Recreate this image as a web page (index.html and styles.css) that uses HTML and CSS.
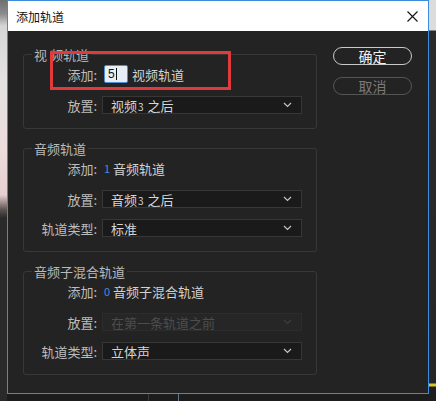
FILE: index.html
```html
<!DOCTYPE html>
<html>
<head>
    <meta charset="utf-8">
    <title>添加轨道</title>
    <link rel="stylesheet" href="styles.css">
</head>
<body>
    <div class="screen">
        <div class="edge-left"></div>
        <div class="middle">
            <div class="dialog">
                <div class="title-bar">
                    <span class="title">添加轨道</span>
                    <svg class="close" width="11" height="11" viewBox="0 0 11 11">
                        <path d="M0.5 0.5L10.5 10.5M10.5 0.5L0.5 10.5" stroke="#111" stroke-width="1.1" fill="none"/>
                    </svg>
                </div>
                <div class="dialog-body">
                    <div class="groups">
                        <fieldset class="group">
                            <legend>视 频轨道</legend>
                            <div class="row">
                                <span class="label">添加:</span>
                                <span class="count-field">5<span class="caret"></span></span>
                                <span class="unit">视频轨道</span>
                            </div>
                            <div class="row">
                                <span class="label">放置:</span>
                                <div class="select">
                                    <span>视频<span class="num">3</span> 之后</span>
                                    <svg class="chevron" width="9" height="6" viewBox="0 0 9 6"><path d="M1 1l3.5 3.5L8 1" stroke="#c4c4c4" stroke-width="1.2" fill="none"/></svg>
                                </div>
                            </div>
                        </fieldset>

                        <fieldset class="group">
                            <legend>音频轨道</legend>
                            <div class="row">
                                <span class="label">添加:</span>
                                <span class="count">1</span>
                                <span class="unit">音频轨道</span>
                            </div>
                            <div class="row">
                                <span class="label">放置:</span>
                                <div class="select">
                                    <span>音频<span class="num">3</span> 之后</span>
                                    <svg class="chevron" width="9" height="6" viewBox="0 0 9 6"><path d="M1 1l3.5 3.5L8 1" stroke="#c4c4c4" stroke-width="1.2" fill="none"/></svg>
                                </div>
                            </div>
                            <div class="row row-tight">
                                <span class="label">轨道类型:</span>
                                <div class="select">
                                    <span>标准</span>
                                    <svg class="chevron" width="9" height="6" viewBox="0 0 9 6"><path d="M1 1l3.5 3.5L8 1" stroke="#c4c4c4" stroke-width="1.2" fill="none"/></svg>
                                </div>
                            </div>
                        </fieldset>

                        <fieldset class="group">
                            <legend>音频子混合轨道</legend>
                            <div class="row">
                                <span class="label">添加:</span>
                                <span class="count">0</span>
                                <span class="unit">音频子混合轨道</span>
                            </div>
                            <div class="row">
                                <span class="label">放置:</span>
                                <div class="select disabled">
                                    <span>在第一条轨道之前</span>
                                    <svg class="chevron" width="9" height="6" viewBox="0 0 9 6"><path d="M1 1l3.5 3.5L8 1" stroke="#3e3e3e" stroke-width="1.2" fill="none"/></svg>
                                </div>
                            </div>
                            <div class="row row-tight">
                                <span class="label">轨道类型:</span>
                                <div class="select">
                                    <span>立体声</span>
                                    <svg class="chevron" width="9" height="6" viewBox="0 0 9 6"><path d="M1 1l3.5 3.5L8 1" stroke="#c4c4c4" stroke-width="1.2" fill="none"/></svg>
                                </div>
                            </div>
                        </fieldset>
                    </div>

                    <div class="buttons">
                        <button type="button" class="btn btn-ok">确定</button>
                        <button type="button" class="btn btn-cancel">取消</button>
                    </div>
                </div>
                <!-- red marker round the video track count -->
                <div class="highlight"></div>
            </div>
            <div class="under"></div>
        </div>
        <div class="edge-right"></div>
    </div>
</body>
</html>
```

FILE: styles.css
```css
body {
    margin: 0;
    background-color: #1d1d1d;
    font-family: "Noto Sans CJK SC", "Noto Sans", sans-serif;
    overflow: hidden;
}

.screen {
    display: flex;
    width: 436px;
    height: 401px;
}

.edge-left {
    width: 7px;
    background: linear-gradient(to bottom, #6f6f6f 0, #8c8c8c 14px, #d6d6d6 26px, #e4e2e2 80px, #eddcdc 150px, #e7cfcf 195px, #5a5050 210px, #2a2a2a 218px, #2a2a2a 100%);
}

.edge-right {
    width: 7px;
    background: linear-gradient(to bottom, #dcdcdc 0, #dcdcdc 30px, #2b2b2b 31px, #262626 383px, #d8c820 384px, #d8c820 386px, #1f1f1f 387px);
}

.middle {
    display: flex;
    flex-direction: column;
    width: 422px;
}

.under {
    flex: 1;
    background:
        linear-gradient(#3a3a3a, #3a3a3a) 141px 0 / 1px 100% no-repeat,
        linear-gradient(#5d7690, #5d7690) 171px 0 / 1px 100% no-repeat,
        #1c1c1c;
}

.dialog {
    position: relative;
    box-sizing: border-box;
    width: 422px;
    height: 394px;
    border: 1px solid #3c8bdc;
    background-color: #232323;
}

.title-bar {
    display: flex;
    justify-content: space-between;
    align-items: center;
    height: 30px;
    padding: 0 10px 0 8px;
    background-color: #fff;
}

.title {
    font-size: 12px;
    color: #111;
}

.dialog-body {
    display: flex;
    padding: 16px 15px 0 15px;
}

.groups {
    display: flex;
    flex-direction: column;
    gap: 12px;
}

.group {
    box-sizing: border-box;
    width: 294px;
    margin: 0;
    padding: 3px 0 14px 0;
    border: 1px solid #383838;
    border-radius: 3px;
}

.group legend {
    margin-left: 8px;
    padding: 0 2px;
    font-size: 13px;
    line-height: 15px;
    color: #b9b9b9;
}

.row {
    display: flex;
    align-items: center;
    height: 18px;
    font-size: 13px;
    color: #cfcfcf;
}

.row + .row {
    margin-top: 13px;
}

.row + .row-tight {
    margin-top: 11px;
}

.label {
    width: 73px;
    text-align: right;
    color: #bdbdbd;
}

/* text box with the caret after the typed count */
.count-field {
    box-sizing: border-box;
    display: flex;
    align-items: center;
    width: 24px;
    height: 18px;
    margin: 0 4px 0 7px;
    padding-left: 3px;
    border: 1px solid #4b8fd8;
    border-radius: 2px;
    background-color: #e9eef6;
    font-family: "Liberation Sans", sans-serif;
    font-size: 12px;
    color: #111;
}

.caret {
    width: 1px;
    height: 12px;
    margin-left: 1px;
    background-color: #111;
}

.count {
    margin: 0 3px 0 7px;
    font-size: 11px;
    color: #3d8ce4;
}

.unit {
    color: #d2d2d2;
}

.select {
    box-sizing: border-box;
    display: flex;
    justify-content: space-between;
    align-items: center;
    width: 200px;
    height: 18px;
    margin-left: 5px;
    padding: 0 9px 0 8px;
    border: 1px solid #373737;
    background-color: #1a1a1a;
    color: #d6d6d6;
}

.select .num {
    font-size: 10px;
    margin: 0 1px;
}

.select.disabled {
    background-color: #262626;
    border-color: #2c2c2c;
    color: #4d4d4d;
}

.buttons {
    display: flex;
    flex-direction: column;
    gap: 12px;
    margin-left: 16px;
}

.btn {
    box-sizing: border-box;
    width: 79px;
    height: 18px;
    padding: 0;
    border-radius: 9px;
    background: transparent;
    font-family: "Noto Sans CJK SC", sans-serif;
    font-size: 14px;
    line-height: 14px;
}

.btn-ok {
    border: 1px solid #c9c9c9;
    color: #f2f2f2;
}

.btn-cancel {
    border: 1px solid #555;
    color: #7a7a7a;
}

.highlight {
    position: absolute;
    left: 42px;
    top: 50px;
    width: 181px;
    height: 39px;
    box-sizing: border-box;
    border: 3px solid #e13a3c;
}
```
